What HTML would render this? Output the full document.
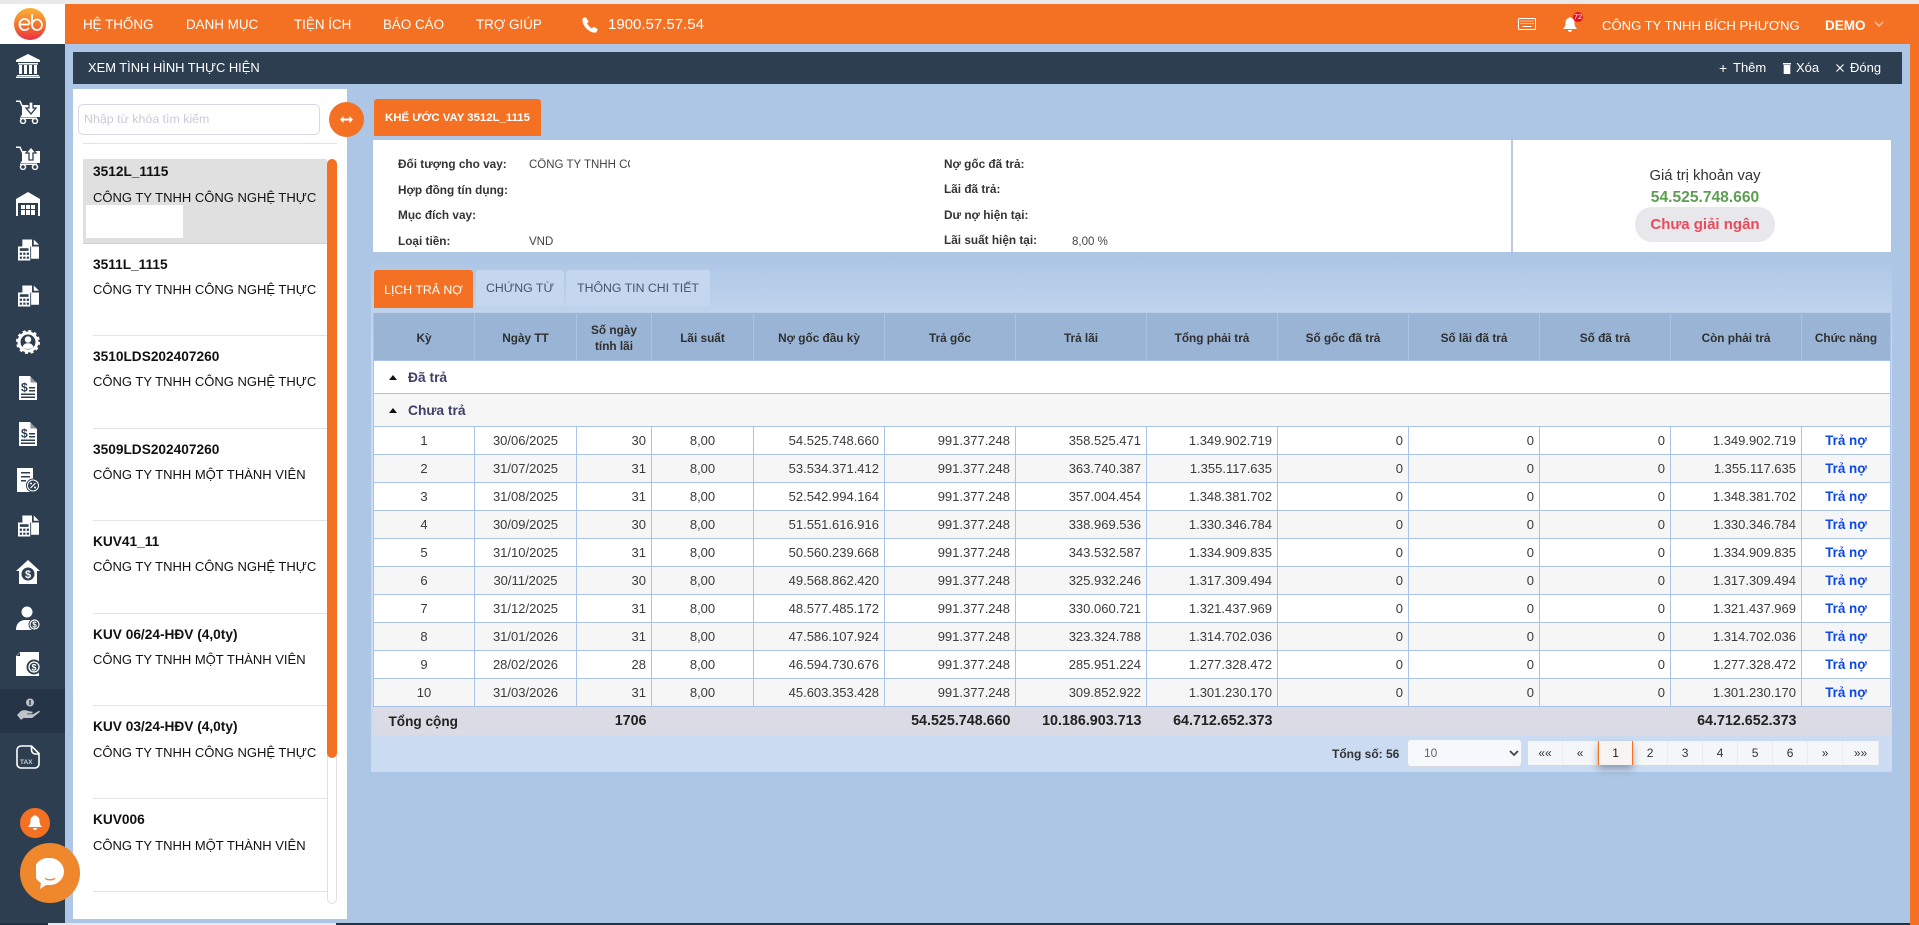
<!DOCTYPE html>
<html lang="vi"><head><meta charset="utf-8"><title>Xem tình hình thực hiện</title>
<style>
*{box-sizing:border-box}
html,body{margin:0;padding:0;width:1919px;height:925px;overflow:hidden;background:#adc6e5;font-family:"Liberation Sans","Noto Sans CJK SC",sans-serif;color:#333}
.a{position:absolute;white-space:nowrap}
.top{left:0;top:0;width:1919px;height:4px;background:#e9e9e9;position:absolute}
.hd{position:absolute;left:65px;top:4px;width:1854px;height:40px;background:#f47023}
.logo{position:absolute;left:0;top:4px;width:65px;height:40px;background:#fff}
.side{position:absolute;left:0;top:44px;width:65px;height:881px;background:#2c3e50}
.act{position:absolute;left:0;top:689px;width:65px;height:44px;background:#253447}
.rs{position:absolute;left:1910px;top:4px;width:9px;height:921px;background:#f47023}
.nav{color:#fff;font-size:13.4px;top:17px;line-height:16px}
.tb{position:absolute;left:73px;top:52px;width:1829px;height:32px;background:#2c3e50}
.w{color:#fff;font-size:13px;line-height:16px}
.lp{position:absolute;left:73px;top:89px;width:274px;height:830px;background:#fff}
.inp{position:absolute;left:78px;top:104px;width:242px;height:31px;border:1px solid #d8d8e6;border-radius:5px;background:#fff;color:#c9cad8;font-size:12.4px;line-height:29px;padding-left:5px;white-space:nowrap}
.item{position:absolute;left:93px;width:234px;height:1px;background:#e4e4e4}
.t1{position:absolute;left:93px;font-weight:bold;font-size:13.7px;line-height:16px;color:#111;white-space:nowrap}
.t2{position:absolute;left:93px;font-size:13px;line-height:16px;color:#111;white-space:nowrap}
.tab{position:absolute;border-radius:3px 3px 0 0;font-size:12.3px;line-height:16px;text-align:center;white-space:nowrap}
.card{position:absolute;left:373px;top:140px;width:1518px;height:112px;background:#fff}
.lb{font-weight:bold;font-size:11.8px;line-height:14px;color:#333}
.vl{font-size:11.5px;line-height:14px;color:#444}
.panel{position:absolute;left:371px;top:258px;width:1521px;height:514px;background:linear-gradient(#adc6e5 0,#bfd2ec 50px,#cbdbf1 110px)}
table{position:absolute;left:373px;top:312px;width:1517px;border-collapse:collapse;table-layout:fixed;font-size:13px;color:#3a3a3a}
th{background:#9ab4d5;font-size:11.8px;line-height:16px;color:#2f2f2f;font-weight:bold;height:48px;border:1px solid #a9c4e8;border-top:1px solid #bcd0ea;padding:2px 2px 0}
td{height:28.05px;border:1px solid #a9c4e8;padding:0 5px;text-align:right;background:#fff;white-space:nowrap}
tr.e td{background:#f6f6f6}
td.c{text-align:center}
td.b{text-align:center;padding:0}
td.b span{color:#0c47ee;font-weight:bold;font-size:13.4px}
td.g{text-align:left;font-weight:bold;color:#3e4068;height:33px;padding-left:34px;position:relative;font-size:13.8px}
td.g:before{content:"";position:absolute;left:15px;top:14px;border-left:4.5px solid transparent;border-right:4.5px solid transparent;border-bottom:5px solid #111}
tr.tot td{background:#dadbe4;border:0;height:28px;font-weight:bold;color:#222;font-size:14.3px}
.sel{position:absolute;left:1407px;top:739px;width:115px;height:28px;background:#f7f8fb;border:1px solid #d6dbe6;border-radius:4px;font-size:12px;line-height:26px;padding-left:16px;color:#666}
.pg{position:absolute;top:741px;width:35.1px;height:24px;background:#f5f6f8;border-right:1px solid #ececf0;font-size:12px;line-height:24px;text-align:center;color:#333}
.pg.on{background:#f7f4f2;border-left:1px solid #f47023;border-right:1px solid #f47023;box-shadow:0 4px 8px rgba(60,70,100,.45);z-index:2;color:#222}
svg{position:absolute;display:block}
</style></head>
<body>
<svg width="0" height="0" style="left:0;top:0">
<defs>
<symbol id="calc" viewBox="0 0 24 24"><path d="M5 0H16V8H24V22H15V8H5z" fill="#fff"/><path d="M18 0l6 6h-6z" fill="#fff"/><path d="M0 8h14v16H0z" fill="#fff"/><path d="M2 10h10v3H2zM2 15h2.500v2.500H2zM6 15h2.500v2.500H6zM10 15h2.500v2.500H10zM2 19.500h2.500V22H2zM6 19.500h2.500V22H6zM10 19.500h2.500V22H10z" fill="#2c3e50"/></symbol>
<symbol id="doc" viewBox="0 0 24 24"><path d="M3 0h11l7 7v17H3z" fill="#fff"/><path d="M14.500 0l6.500 6.500h-6.500z" fill="#2c3e50" opacity=".55"/><path d="M5 17.500h14v1.500H5zM5 20.500h14V22H5zM13 11h6v1.500h-6zM13 14h6v1.500h-6z" fill="#2c3e50"/><text x="5" y="15.500" font-size="12" font-weight="bold" fill="#2c3e50" font-family="Liberation Sans">$</text></symbol>
<symbol id="cart1" viewBox="0 0 24 24"><path d="M0 .5h4.500l2 4.500H24v12H5l-.5-1.500H21V7H6L3.500 2H0z" fill="#fff"/><path d="M6 5h18v11H6z" fill="#fff"/><path d="M4 17.500h17v1.500H4z" fill="#fff"/><circle cx="7" cy="21" r="2.500" fill="none" stroke="#fff" stroke-width="1.500"/><circle cx="19" cy="21" r="2.500" fill="none" stroke="#fff" stroke-width="1.500"/><path d="M13 2h4v6h3l-5 6-5-6h3z" fill="#fff" stroke="#2c3e50" stroke-width="1.300"/></symbol>
<symbol id="cart2" viewBox="0 0 24 24"><path d="M0 .5h4.500l2 4.500H24v12H5l-.5-1.500H21V7H6L3.500 2H0z" fill="#fff"/><path d="M6 5h18v11H6z" fill="#fff"/><path d="M4 17.500h17v1.500H4z" fill="#fff"/><circle cx="7" cy="21" r="2.500" fill="none" stroke="#fff" stroke-width="1.500"/><circle cx="19" cy="21" r="2.500" fill="none" stroke="#fff" stroke-width="1.500"/><path d="M13 14V7h-3l5-6 5 6h-3v7z" fill="#fff" stroke="#2c3e50" stroke-width="1.300"/></symbol>
</defs></svg>

<div class="top"></div>
<div class="hd"></div>
<div class="rs"></div>
<div class="logo"></div>
<svg style="left:14px;top:8px" width="32" height="32" viewBox="0 0 32 32"><defs><linearGradient id="lg" x1="0" y1="0" x2="0" y2="1"><stop offset="0" stop-color="#fbb03b"/><stop offset=".55" stop-color="#f4732a"/><stop offset="1" stop-color="#ea2f4a"/></linearGradient></defs><circle cx="16" cy="16" r="16" fill="url(#lg)"/><path d="M5.500 16.500h10M15.500 16c0-3-2.300-5-5-5s-5 2.300-5 5.500 2.300 5.500 5 5.500c1.800 0 3.300-.7 4.300-2" fill="none" stroke="#fff" stroke-width="1.800"/><path d="M18 6v11c0 2.800 2.200 5 5 5s5-2.200 5-5-2.200-5.500-5-5.500-5 2.500-5 5.500" fill="none" stroke="#fff" stroke-width="1.800"/></svg>

<div class="a nav" style="left:83px">HỆ THỐNG</div>
<div class="a nav" style="left:186px">DANH MỤC</div>
<div class="a nav" style="left:294px">TIỆN ÍCH</div>
<div class="a nav" style="left:383px">BÁO CÁO</div>
<div class="a nav" style="left:476px">TRỢ GIÚP</div>
<svg style="left:581px;top:16px" width="17" height="17" viewBox="0 0 24 24"><path d="M6.600 1.500 2.500 3C1 8 4 14 8 18s9.500 6.500 14 5l1.500-4.500-5.500-3.500-2.500 2.500c-2.500-1-6-5-7-7.500L11 8z" fill="#fff"/></svg>
<div class="a" style="left:608px;top:16px;color:#fff;font-size:15px;line-height:18px">1900.57.57.54</div>

<svg style="left:1518px;top:18px" width="18" height="12" viewBox="0 0 18 12"><rect x=".5" y=".5" width="17" height="11" rx="1" fill="none" stroke="#fff"/><path d="M2.500 3h13M2.500 5.500h13" stroke="#fff" stroke-dasharray="1 1"/><path d="M4.500 8.500h9" stroke="#fff"/></svg>
<svg style="left:1563px;top:17px" width="14" height="15" viewBox="0 0 14 15"><path d="M7 0c.7 0 1 .5 1 1 2.500.5 3.500 2.500 3.500 4.500 0 3 .7 4.500 2.500 6.500H0c1.800-2 2.500-3.500 2.500-6.500C2.500 3.500 3.500 1.500 6 1c0-.5.300-1 1-1zM5 13h4c0 1-.9 2-2 2s-2-1-2-2z" fill="#fff"/></svg>
<div class="a" style="left:1573px;top:12px;width:10px;height:10px;border-radius:50%;background:#e8101f;color:#fff;font-size:7.500px;line-height:10px;text-align:center">72</div>
<div class="a" style="left:1602px;top:17px;color:#fff;font-size:13.100px;line-height:17px">CÔNG TY TNHH BÍCH PHƯƠNG</div>
<div class="a" style="left:1825px;top:17px;color:#fff;font-size:13.500px;font-weight:bold;line-height:17px">DEMO</div>
<svg style="left:1874px;top:21px" width="10" height="7" viewBox="0 0 10 7"><path d="M1 1l4 4 4-4" fill="none" stroke="#f7b48d" stroke-width="1.800"/></svg>

<div class="side"></div>
<div class="act"></div>
<svg style="left:16px;top:54px" width="24" height="24" viewBox="0 0 24 24"><path d="M12 0 24 6v2H0V6zM1 21h22v1H1zM0 22.500h24V24H0zM2 9h20v1.500H2zM3 11h3v9H3zM8 11h3v9H8zM13 11h3v9h-3zM18 11h3v9h-3z" fill="#fff"/></svg>
<svg style="left:16px;top:100px" width="24" height="24"><use href="#cart1"/></svg>
<svg style="left:16px;top:146px" width="24" height="24"><use href="#cart2"/></svg>
<svg style="left:16px;top:192px" width="24" height="24" viewBox="0 0 24 24"><path d="M12 0 24 7v17h-2V11H2v13H0V7z" fill="#fff"/><path d="M5 13h4v4H5zM10 13h4v4h-4zM15 13h4v4h-4zM5 18h4v5H5zM10 18h4v5h-4zM15 18h4v5h-4z" fill="#fff"/></svg>
<svg style="left:18px;top:238px" width="21" height="24"><use href="#calc"/></svg>
<svg style="left:18px;top:284px" width="21" height="24"><use href="#calc"/></svg>
<svg style="left:16px;top:330px" width="24" height="24" viewBox="0 0 24 24"><circle cx="12" cy="12" r="9" fill="none" stroke="#fff" stroke-width="3"/><circle cx="12" cy="12" r="11" fill="none" stroke="#fff" stroke-width="2" stroke-dasharray="3 2.760"/><circle cx="12" cy="9.500" r="3.200" fill="#fff"/><path d="M6.500 17c1-3 3-3.800 5.500-3.800s4.500.8 5.500 3.800c-1.500 1.500-3.500 2-5.500 2s-4-.5-5.500-2z" fill="#fff"/></svg>
<svg style="left:16px;top:376px" width="24" height="24"><use href="#doc"/></svg>
<svg style="left:16px;top:422px" width="24" height="24"><use href="#doc"/></svg>
<svg style="left:17px;top:468px" width="23" height="24" viewBox="0 0 23 24"><path d="M0 0h16v24H0z" fill="#fff"/><path d="M4 4h9v1.500H4zM4 8h9v1.500H4zM4 12h5v1.500H4z" fill="#2c3e50"/><circle cx="16" cy="17.500" r="6.500" fill="#fff" stroke="#2c3e50" stroke-width="1"/><circle cx="16" cy="17.500" r="5" fill="#2c3e50"/><path d="M13.500 20l5-5" stroke="#fff" stroke-width="1.200"/><circle cx="14" cy="15.500" r="1" fill="#fff"/><circle cx="18" cy="19.500" r="1" fill="#fff"/></svg>
<svg style="left:18px;top:514px" width="21" height="24"><use href="#calc"/></svg>
<svg style="left:16px;top:560px" width="24" height="24" viewBox="0 0 24 24"><path d="M12 0 24 11h-3v13H3V11H0z" fill="#fff"/><circle cx="12" cy="14" r="6.500" fill="#2c3e50"/><text x="12" y="18" text-anchor="middle" font-size="11" font-weight="bold" fill="#fff" font-family="Liberation Sans">$</text></svg>
<svg style="left:16px;top:606px" width="24" height="24" viewBox="0 0 24 24"><circle cx="11" cy="6" r="5.500" fill="#fff"/><path d="M0 24c0-6 3-9 8-10h6c3 .8 5 3 6 5v5z" fill="#fff"/><circle cx="18.500" cy="18.500" r="6" fill="#2c3e50"/><circle cx="18.500" cy="18.500" r="4.500" fill="none" stroke="#fff" stroke-width="1.200"/><text x="18.500" y="21.500" text-anchor="middle" font-size="8" font-weight="bold" fill="#fff" font-family="Liberation Sans">$</text></svg>
<svg style="left:16px;top:652px" width="25" height="24" viewBox="0 0 25 24"><path d="M4 0h19v24H0V4z" fill="#fff"/><path d="M4 .5 .5 4H4z" fill="#2c3e50"/><circle cx="18" cy="15" r="7.500" fill="#2c3e50"/><circle cx="18" cy="15" r="5" fill="none" stroke="#fff" stroke-width="1.300"/><text x="18" y="18.500" text-anchor="middle" font-size="9" font-weight="bold" fill="#fff" font-family="Liberation Sans">$</text></svg>
<svg style="left:17px;top:698px" width="23" height="23" viewBox="0 0 23 23"><circle cx="13" cy="4.500" r="4" fill="#bfc3c8"/><path d="M12.300 2h1.400v5h-1.400z" fill="#253447"/><path d="M0 17l4-4c3-1.500 5-1 9 .5h2c1 0 1 1.500-.5 2H10v.8h6l6-3.500c1 0 1 .8.5 1.400L15 20H7l-2 1 -1 1z" fill="#bfc3c8"/></svg>
<svg style="left:16px;top:745px" width="24" height="24" viewBox="0 0 24 24"><path d="M5 1h10.500L23 8.500V19a4 4 0 0 1-4 4H5a4 4 0 0 1-4-4V5a4 4 0 0 1 4-4z" fill="none" stroke="#fff" stroke-width="1.600"/><path d="M15.500 1v4a4 4 0 0 0 4 4H23" fill="none" stroke="#fff" stroke-width="1.600"/><text x="4" y="19" font-size="6.500" font-weight="bold" fill="#c9ced4" font-family="Liberation Sans">TAX</text></svg>

<div class="tb"></div>
<div class="a" style="left:88px;top:60px;color:#fff;font-size:12.900px;line-height:16px">XEM TÌNH HÌNH THỰC HIỆN</div>
<div class="a w" style="left:1719px;top:60px;font-size:14px">+</div>
<div class="a w" style="left:1733px;top:60px">Thêm</div>
<svg style="left:1783px;top:63px" width="8" height="11" viewBox="0 0 8 11"><path d="M0 0h8v1.500H0zM.7 2h6.600v9H.7z" fill="#fff"/></svg>
<div class="a w" style="left:1796px;top:60px">Xóa</div>
<svg style="left:1836px;top:64px" width="8" height="8" viewBox="0 0 8 8"><path d="M.5.500l7 7M7.500.500l-7 7" stroke="#fff" stroke-width="1.200"/></svg>
<div class="a w" style="left:1850px;top:60px">Đóng</div>

<div class="lp"></div>
<div class="inp">Nhập từ khóa tìm kiếm</div>
<div class="a" style="left:83px;top:143px;width:254px;height:1px;background:#e4e4e4"></div>
<div class="a" style="left:329px;top:102px;width:35px;height:35px;border-radius:50%;background:#f47023"></div>
<svg style="left:340px;top:115px" width="13" height="9" viewBox="0 0 13 9"><path d="M0 4.500 3.500 1v2.500h6V1L13 4.500 9.500 8V5.500h-6V8z" fill="#fff"/></svg>

<div class="a" style="left:83px;top:159px;width:244px;height:85px;background:#e0e0e0;border-bottom:1px solid #cfcfcf"></div>
<div class="a" style="left:86px;top:205px;width:97px;height:33px;background:#fff"></div>
<div class="a" style="left:327px;top:159px;width:10px;height:745px;border:1px solid #e0e0e0;border-radius:5px"></div>
<div class="a" style="left:327px;top:159px;width:10px;height:599px;background:#f47023;border-radius:5px"></div>

<div class="t1" style="top:164px">3512L_1115</div><div class="t2" style="top:190px">CÔNG TY TNHH CÔNG NGHỆ THỰC</div>
<div class="t1" style="top:257px">3511L_1115</div><div class="t2" style="top:282px">CÔNG TY TNHH CÔNG NGHỆ THỰC</div>
<div class="item" style="top:335px"></div>
<div class="t1" style="top:349px">3510LDS202407260</div><div class="t2" style="top:374px">CÔNG TY TNHH CÔNG NGHỆ THỰC</div>
<div class="item" style="top:428px"></div>
<div class="t1" style="top:442px">3509LDS202407260</div><div class="t2" style="top:467px">CÔNG TY TNHH MỘT THÀNH VIÊN</div>
<div class="item" style="top:520px"></div>
<div class="t1" style="top:534px">KUV41_11</div><div class="t2" style="top:559px">CÔNG TY TNHH CÔNG NGHỆ THỰC</div>
<div class="item" style="top:613px"></div>
<div class="t1" style="top:627px">KUV 06/24-HĐV (4,0ty)</div><div class="t2" style="top:652px">CÔNG TY TNHH MỘT THÀNH VIÊN</div>
<div class="item" style="top:705px"></div>
<div class="t1" style="top:719px">KUV 03/24-HĐV (4,0ty)</div><div class="t2" style="top:745px">CÔNG TY TNHH CÔNG NGHỆ THỰC</div>
<div class="item" style="top:798px"></div>
<div class="t1" style="top:812px">KUV006</div><div class="t2" style="top:838px">CÔNG TY TNHH MỘT THÀNH VIÊN</div>
<div class="item" style="top:891px"></div>

<div class="tab" style="left:374px;top:99px;width:167px;height:37px;background:#f47023;color:#fff;font-weight:bold;font-size:11.400px;line-height:38px">KHẾ ƯỚC VAY 3512L_1115</div>
<div class="card"></div>
<div class="a lb" style="left:398px;top:157px">Đối tượng cho vay:</div>
<div class="a vl" style="left:529px;top:158px;width:101px;overflow:hidden">CÔNG TY TNHH CÔNG NGHỆ</div>
<div class="a lb" style="left:398px;top:183px">Hợp đồng tín dụng:</div>
<div class="a lb" style="left:398px;top:208px">Mục đích vay:</div>
<div class="a lb" style="left:398px;top:234px">Loại tiền:</div>
<div class="a vl" style="left:529px;top:235px">VND</div>
<div class="a lb" style="left:944px;top:157px">Nợ gốc đã trả:</div>
<div class="a lb" style="left:944px;top:182px">Lãi đã trả:</div>
<div class="a lb" style="left:944px;top:208px">Dư nợ hiện tại:</div>
<div class="a lb" style="left:944px;top:233px">Lãi suất hiện tại:</div>
<div class="a vl" style="left:1072px;top:235px">8,00 %</div>
<div class="a" style="left:1511px;top:140px;width:2px;height:112px;background:#bccde2"></div>
<div class="a" style="left:1599px;top:167px;width:212px;text-align:center;font-size:14.800px;line-height:18px;color:#333">Giá trị khoản vay</div>
<div class="a" style="left:1599px;top:189px;width:212px;text-align:center;font-size:15.600px;font-weight:bold;line-height:18px;color:#5c9e52">54.525.748.660</div>
<div class="a" style="left:1635px;top:207px;width:140px;height:35px;border-radius:17px;background:#e8e8ec;text-align:center;font-size:15px;font-weight:bold;line-height:35px;color:#ec4a5b">Chưa giải ngân</div>

<div class="panel"></div>
<div class="tab" style="left:374px;top:270px;width:99px;height:38px;background:#f47023;color:#fff;line-height:41px">LỊCH TRẢ NỢ</div>
<div class="tab" style="left:476px;top:270px;width:88px;height:36px;background:#c5d7ef;color:#44546a;line-height:37px">CHỨNG TỪ</div>
<div class="tab" style="left:566px;top:270px;width:144px;height:36px;background:#c5d7ef;color:#44546a;line-height:37px">THÔNG TIN CHI TIẾT</div>

<table>
<colgroup><col style="width:101px"><col style="width:102px"><col style="width:75px"><col style="width:102px"><col style="width:131px"><col style="width:131px"><col style="width:131px"><col style="width:131px"><col style="width:131px"><col style="width:131px"><col style="width:131px"><col style="width:131px"><col style="width:89px"></colgroup>
<tr><th>Kỳ</th><th>Ngày TT</th><th>Số ngày<br>tính lãi</th><th>Lãi suất</th><th>Nợ gốc đầu kỳ</th><th>Trả gốc</th><th>Trả lãi</th><th>Tổng phải trả</th><th>Số gốc đã trả</th><th>Số lãi đã trả</th><th>Số đã trả</th><th>Còn phải trả</th><th>Chức năng</th></tr>
<tr><td class="g" colspan="13">Đã trả</td></tr>
<tr class="e"><td class="g" colspan="13">Chưa trả</td></tr>
<tr><td class="c">1</td><td class="c">30/06/2025</td><td>30</td><td class="c">8,00</td><td>54.525.748.660</td><td>991.377.248</td><td>358.525.471</td><td>1.349.902.719</td><td>0</td><td>0</td><td>0</td><td>1.349.902.719</td><td class="b"><span>Trả nợ</span></td></tr>
<tr class="e"><td class="c">2</td><td class="c">31/07/2025</td><td>31</td><td class="c">8,00</td><td>53.534.371.412</td><td>991.377.248</td><td>363.740.387</td><td>1.355.117.635</td><td>0</td><td>0</td><td>0</td><td>1.355.117.635</td><td class="b"><span>Trả nợ</span></td></tr>
<tr><td class="c">3</td><td class="c">31/08/2025</td><td>31</td><td class="c">8,00</td><td>52.542.994.164</td><td>991.377.248</td><td>357.004.454</td><td>1.348.381.702</td><td>0</td><td>0</td><td>0</td><td>1.348.381.702</td><td class="b"><span>Trả nợ</span></td></tr>
<tr class="e"><td class="c">4</td><td class="c">30/09/2025</td><td>30</td><td class="c">8,00</td><td>51.551.616.916</td><td>991.377.248</td><td>338.969.536</td><td>1.330.346.784</td><td>0</td><td>0</td><td>0</td><td>1.330.346.784</td><td class="b"><span>Trả nợ</span></td></tr>
<tr><td class="c">5</td><td class="c">31/10/2025</td><td>31</td><td class="c">8,00</td><td>50.560.239.668</td><td>991.377.248</td><td>343.532.587</td><td>1.334.909.835</td><td>0</td><td>0</td><td>0</td><td>1.334.909.835</td><td class="b"><span>Trả nợ</span></td></tr>
<tr class="e"><td class="c">6</td><td class="c">30/11/2025</td><td>30</td><td class="c">8,00</td><td>49.568.862.420</td><td>991.377.248</td><td>325.932.246</td><td>1.317.309.494</td><td>0</td><td>0</td><td>0</td><td>1.317.309.494</td><td class="b"><span>Trả nợ</span></td></tr>
<tr><td class="c">7</td><td class="c">31/12/2025</td><td>31</td><td class="c">8,00</td><td>48.577.485.172</td><td>991.377.248</td><td>330.060.721</td><td>1.321.437.969</td><td>0</td><td>0</td><td>0</td><td>1.321.437.969</td><td class="b"><span>Trả nợ</span></td></tr>
<tr class="e"><td class="c">8</td><td class="c">31/01/2026</td><td>31</td><td class="c">8,00</td><td>47.586.107.924</td><td>991.377.248</td><td>323.324.788</td><td>1.314.702.036</td><td>0</td><td>0</td><td>0</td><td>1.314.702.036</td><td class="b"><span>Trả nợ</span></td></tr>
<tr><td class="c">9</td><td class="c">28/02/2026</td><td>28</td><td class="c">8,00</td><td>46.594.730.676</td><td>991.377.248</td><td>285.951.224</td><td>1.277.328.472</td><td>0</td><td>0</td><td>0</td><td>1.277.328.472</td><td class="b"><span>Trả nợ</span></td></tr>
<tr class="e"><td class="c">10</td><td class="c">31/03/2026</td><td>31</td><td class="c">8,00</td><td>45.603.353.428</td><td>991.377.248</td><td>309.852.922</td><td>1.301.230.170</td><td>0</td><td>0</td><td>0</td><td>1.301.230.170</td><td class="b"><span>Trả nợ</span></td></tr>
<tr class="tot"><td colspan="2" style="text-align:left;padding-left:15px;font-size:13.600px">Tổng cộng</td><td>1706</td><td></td><td></td><td>54.525.748.660</td><td>10.186.903.713</td><td>64.712.652.373</td><td></td><td></td><td></td><td>64.712.652.373</td><td></td></tr>
</table>

<div class="a" style="left:1332px;top:746px;font-size:12px;font-weight:bold;line-height:16px;color:#333">Tổng số: 56</div>
<div class="sel">10</div>
<svg style="left:1509px;top:750px" width="10" height="7" viewBox="0 0 10 7"><path d="M1 1l4 4 4-4" fill="none" stroke="#444" stroke-width="1.800"/></svg>
<div class="pg" style="left:1528px">««</div>
<div class="pg" style="left:1563px">«</div>
<div class="pg on" style="left:1598px">1</div>
<div class="pg" style="left:1633px">2</div>
<div class="pg" style="left:1668px">3</div>
<div class="pg" style="left:1703px">4</div>
<div class="pg" style="left:1738px">5</div>
<div class="pg" style="left:1773px">6</div>
<div class="pg" style="left:1808px">»</div>
<div class="pg" style="left:1843px;width:36px">»»</div>

<div class="a" style="left:20px;top:808px;width:30px;height:30px;border-radius:50%;background:#f47023"></div>
<svg style="left:28px;top:815px" width="14" height="15" viewBox="0 0 14 15"><path d="M7 0c.7 0 1 .5 1 1 2.500.5 3.500 2.500 3.500 4.500 0 3 .7 4.500 2.500 6.500H0c1.800-2 2.500-3.500 2.500-6.500C2.500 3.500 3.500 1.500 6 1c0-.5.300-1 1-1zM5 13h4c0 1-.9 2-2 2s-2-1-2-2z" fill="#fff"/></svg>
<div class="a" style="left:20px;top:843px;width:60px;height:60px;border-radius:50%;background:#ef872d"></div>
<svg style="left:36px;top:858px" width="28" height="31" viewBox="0 0 28 31"><path d="M14 0a14 13.500 0 0 1 0 27c-1.500 0-3 0-4 0l-6 4 1-6A14 13.500 0 0 1 14 0z" fill="#fff"/><path d="M9.500 20.500c2.500 1.500 6.500 1.500 9 0-.5 2-8.500 2-9 0z" fill="#ef872d" stroke="#ef872d"/></svg>
<div class="a" style="left:0;top:923px;width:48px;height:2px;background:#1f3242"></div>
<div class="a" style="left:48px;top:923px;width:288px;height:2px;background:#e8e8e8"></div>
<div class="a" style="left:336px;top:923px;width:1574px;height:2px;background:#223344"></div>
</body></html>
